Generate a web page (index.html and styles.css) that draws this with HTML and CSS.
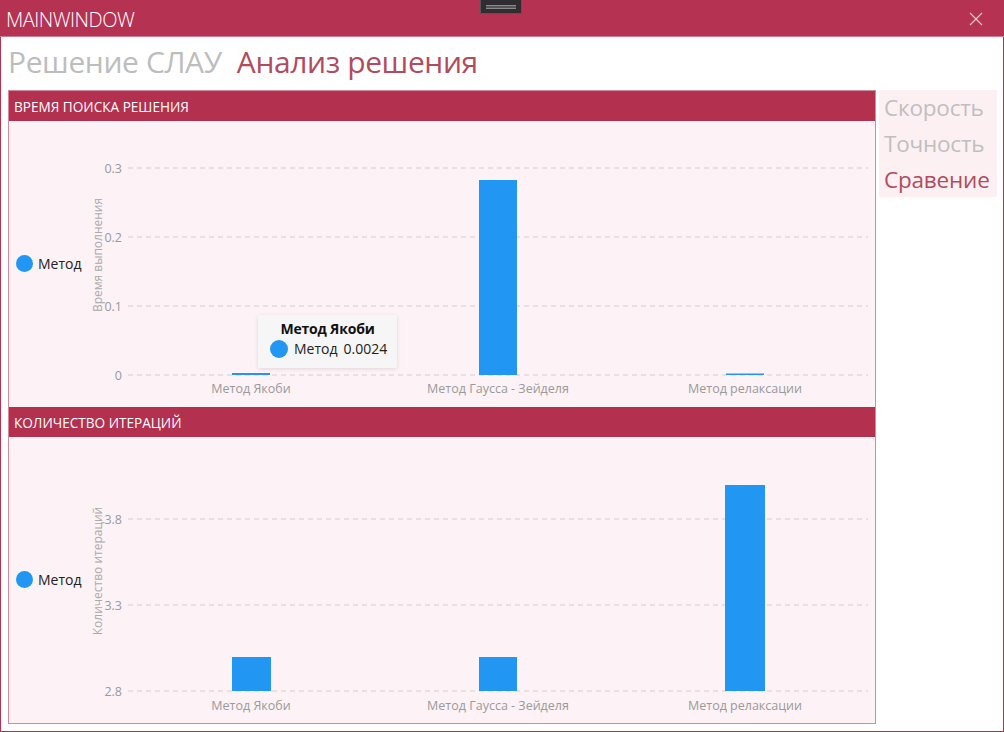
FILE: index.html
```html
<!DOCTYPE html>
<html lang="ru">
<head>
<meta charset="utf-8">
<title>MainWindow</title>
<link rel="stylesheet" href="styles.css">
</head>
<body>
<div class="window">
  <header class="titlebar">
    <span class="title">MAINWINDOW</span>
    <div class="grip"><span></span></div>
    <svg class="close" width="14" height="14" viewBox="0 0 14 14"><path d="M1 1 L13 13 M13 1 L1 13" stroke="#f3c6d1" stroke-width="1.2" fill="none"/></svg>
  </header>

  <nav class="tabs">
    <span class="tab">Решение СЛАУ</span>
    <span class="tab active">Анализ решения</span>
  </nav>

  <main class="content">
    <section class="panel">
      <div class="section-head">ВРЕМЯ ПОИСКА РЕШЕНИЯ</div>
      <div class="chart">
        <div class="legend"><span class="dot"></span><span>Метод</span></div>
        <svg class="plot" width="786" height="285" viewBox="0 0 786 285">
          <text class="ytitle" transform="translate(10 134) rotate(-90)">Время выполнения</text>
          <g class="grid">
            <line x1="39" y1="47" x2="779" y2="47"/>
            <line x1="39" y1="116" x2="779" y2="116"/>
            <line x1="39" y1="185" x2="779" y2="185"/>
            <line x1="39" y1="254" x2="779" y2="254"/>
          </g>
          <g class="ticks">
            <text x="33" y="51.5">0.3</text>
            <text x="33" y="120.5">0.2</text>
            <text x="33" y="189.5">0.1</text>
            <text x="33" y="258.5">0</text>
          </g>
          <g class="bars">
            <rect x="143" y="252" width="38" height="2"/>
            <rect x="390" y="59" width="38" height="195"/>
            <rect x="637" y="252.5" width="38" height="1.5"/>
          </g>
          <g class="xlabels">
            <text x="162" y="272">Метод Якоби</text>
            <text x="409" y="272">Метод Гаусса - Зейделя</text>
            <text x="656" y="272">Метод релаксации</text>
          </g>
        </svg>
        <div class="tooltip">
          <div class="tip-title">Метод Якоби</div>
          <div class="tip-row"><span class="dot"></span><span>Метод</span><span class="tip-val">0.0024</span></div>
        </div>
      </div>

      <div class="section-head">КОЛИЧЕСТВО ИТЕРАЦИЙ</div>
      <div class="chart">
        <div class="legend"><span class="dot"></span><span>Метод</span></div>
        <svg class="plot" width="786" height="285" viewBox="0 0 786 285">
          <text class="ytitle" transform="translate(10 134) rotate(-90)">Количество итераций</text>
          <g class="grid">
            <line x1="39" y1="82" x2="779" y2="82"/>
            <line x1="39" y1="168" x2="779" y2="168"/>
            <line x1="39" y1="254" x2="779" y2="254"/>
          </g>
          <g class="ticks">
            <text x="33" y="86.5">3.8</text>
            <text x="33" y="172.5">3.3</text>
            <text x="33" y="258.5">2.8</text>
          </g>
          <g class="bars">
            <rect x="143" y="220" width="39" height="34"/>
            <rect x="390" y="220" width="38" height="34"/>
            <rect x="636" y="48" width="40" height="206"/>
          </g>
          <g class="xlabels">
            <text x="162" y="273">Метод Якоби</text>
            <text x="409" y="273">Метод Гаусса - Зейделя</text>
            <text x="656" y="273">Метод релаксации</text>
          </g>
        </svg>
      </div>
    </section>

    <aside class="side">
      <span class="side-item">Скорость</span>
      <span class="side-item">Точность</span>
      <span class="side-item active">Сравение</span>
    </aside>
  </main>
</div>
</body>
</html>
```

FILE: styles.css
```css
* { box-sizing: border-box; }
html, body { margin: 0; padding: 0; }
body {
  width: 1004px;
  height: 732px;
  background: #ffffff;
  font-family: "Open Sans", "Noto Sans", sans-serif;
  overflow: hidden;
}
.window {
  width: 1004px;
  height: 732px;
  border: 1px solid #b5314f;
  border-top: none;
  display: flex;
  flex-direction: column;
  position: relative;
}
.titlebar {
  height: 37px;
  margin: 0 -1px;
  background: #b63252;
  border-bottom: 1px solid #d67a90;
  display: flex;
  align-items: center;
  justify-content: space-between;
  padding: 0 21px 0 6px;
  flex-shrink: 0;
  position: relative;
}
.title {
  color: #fff;
  font-size: 20px;
  font-weight: 300;
  letter-spacing: -0.5px;
  margin-top: 2px;
}
.grip {
  position: absolute;
  left: 480px;
  top: 0;
  width: 42px;
  height: 14px;
  background: #2e2e30;
  border: 1px solid #555;
  border-top: none;
  display: flex;
  align-items: center;
  justify-content: center;
}
.grip span {
  width: 30px;
  height: 4px;
  border-top: 1px solid #8a8a8a;
  border-bottom: 1px solid #8a8a8a;
  background: #555;
}
.close { display: block; margin-top: 1px; }

.tabs {
  height: 53px;
  display: flex;
  align-items: center;
  gap: 15px;
  padding: 0 0 4px 7px;
  flex-shrink: 0;
}
.tab {
  font-size: 30px;
  color: #bdbdbd;
  letter-spacing: -0.4px;
}
.tab.active { color: #b24b5d; }

.content {
  display: flex;
  align-items: flex-start;
  gap: 3px;
  padding: 0 0 0 7px;
}
.panel {
  width: 868px;
  height: 634px;
  border: 1px solid #d5899c;
  background: #fdf2f5;
  display: flex;
  flex-direction: column;
}
.section-head {
  height: 30px;
  background: #b3304f;
  color: #fff;
  font-size: 13.6px;
  padding-left: 5px;
  display: flex;
  align-items: center;
  flex-shrink: 0;
}
.chart {
  height: 285px;
  display: flex;
  align-items: center;
  position: relative;
  flex-shrink: 0;
}
.chart + .section-head { margin-top: 1px; }
.legend {
  width: 80px;
  display: flex;
  align-items: center;
  gap: 5px;
  padding-left: 7px;
  font-size: 14px;
  color: #222;
}
.dot {
  width: 17px;
  height: 17px;
  border-radius: 50%;
  background: #2196f3;
  flex-shrink: 0;
}
.plot { display: block; flex-shrink: 0; }
.plot text { font-family: "Open Sans", "Noto Sans", sans-serif; }
.ytitle { font-size: 12px; fill: #aaaaaa; text-anchor: middle; dominant-baseline: middle; }
.grid line { stroke: #e2dadc; stroke-width: 1.5; stroke-dasharray: 5 4; }
.ticks text { font-size: 12.5px; fill: #9a9a9a; text-anchor: end; }
.bars rect { fill: #2196f3; }
.xlabels text { font-size: 12.5px; fill: #9a9a9a; text-anchor: middle; }

.tooltip {
  position: absolute;
  left: 249px;
  top: 194px;
  width: 139px;
  height: 53px;
  background: #f7f6f6;
  box-shadow: 0 1px 4px rgba(0,0,0,0.12);
  border-radius: 2px;
  display: flex;
  flex-direction: column;
  align-items: center;
  padding-top: 4px;
}
.tip-title {
  font-size: 14px;
  font-weight: 700;
  color: #111;
  letter-spacing: -0.2px;
}
.tip-row {
  display: flex;
  align-items: center;
  gap: 5px;
  font-size: 14px;
  color: #222;
  align-self: flex-start;
  padding-left: 12px;
  margin-top: 1px;
}
.tip-row .dot { width: 18px; height: 18px; margin-right: 1px; }
.tip-val { margin-left: 1px; }

.side {
  width: 118px;
  height: 107px;
  background: #fdf0f3;
  display: flex;
  flex-direction: column;
  padding: 0 0 0 5px;
}
.side-item {
  font-size: 22.5px;
  line-height: 36px;
  color: #bfbfbf;
  letter-spacing: -0.2px;
}
.side-item.active { color: #b24b5d; }
```
